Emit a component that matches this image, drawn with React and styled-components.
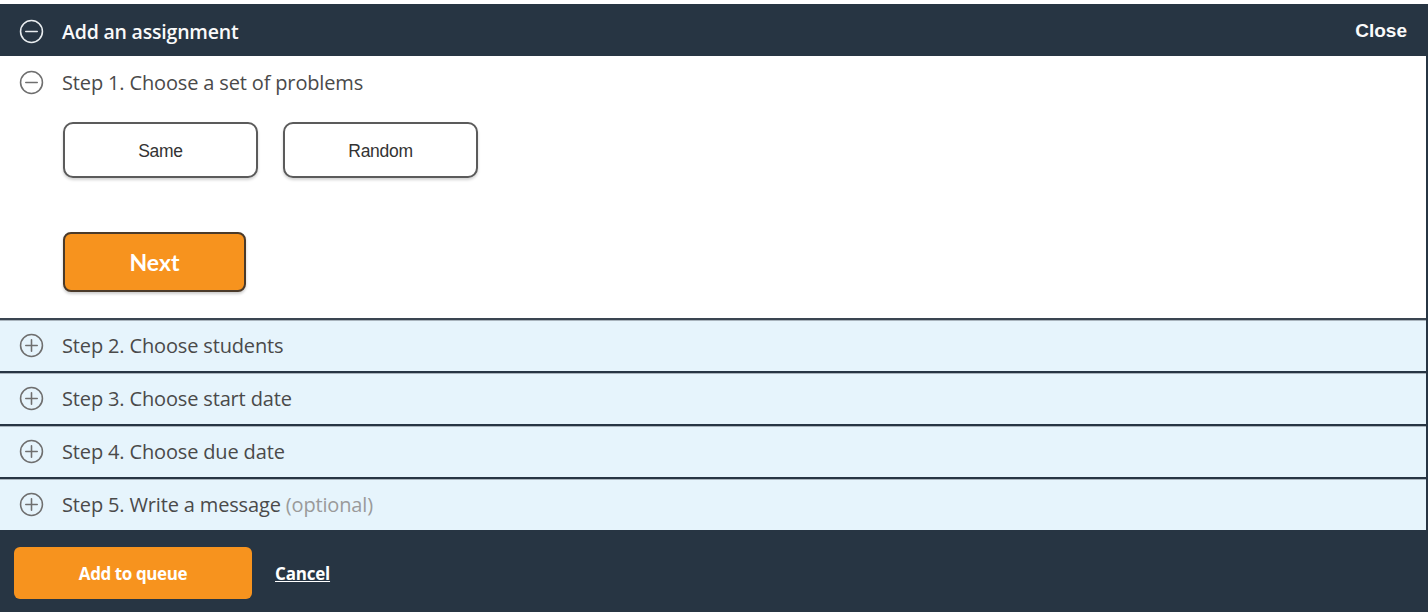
import React from 'react'
import styled, { createGlobalStyle } from 'styled-components'

const GlobalStyle = createGlobalStyle`
  html, body {
    margin: 0;
    padding: 0;
    background: #ffffff;
  }
  body {
    font-family: 'Open Sans', Lato, sans-serif;
  }
`

const navy = '#273543'

const Frame = styled('div')({
  marginTop: 4,
  width: 1428,
  height: 608,
  boxSizing: 'border-box',
  borderRight: `2px solid ${navy}`,
  display: 'flex',
  flexDirection: 'column',
  background: navy
})

const Header = styled('div')({
  height: 52,
  flexShrink: 0,
  display: 'flex',
  alignItems: 'center',
  justifyContent: 'space-between',
  padding: '2px 19px 0 19px',
  boxSizing: 'border-box',
  background: navy,
  color: '#fafafa'
})

const HeaderTitle = styled('div')({
  display: 'flex',
  alignItems: 'center',
  gap: 18,
  fontSize: 19.5,
  fontWeight: 600,
  letterSpacing: -0.2
})

const CloseLink = styled('span')({
  fontFamily: "'Liberation Sans', Arial, sans-serif",
  fontWeight: 700,
  fontSize: 19,
  cursor: 'pointer'
})

const OpenPanel = styled('div')({
  background: '#fff',
  height: 262,
  flexShrink: 0,
  display: 'flex',
  flexDirection: 'column',
  borderBottom: '2px solid #3a4551'
})

const StepHeading = styled('div')(({ height }) => ({
  height: height || 51,
  boxSizing: 'border-box',
  display: 'flex',
  alignItems: 'center',
  gap: 18,
  padding: '0 19px 2px',
  fontSize: 20,
  letterSpacing: -0.15,
  color: '#4a4a4a',
  flexShrink: 0
}))

const Optional = styled('span')({
  color: '#9a9a9a',
  marginLeft: 5
})

const Choices = styled('div')({
  display: 'flex',
  gap: 25,
  padding: '12px 0 0 63px'
})

const ChoiceButton = styled('button')({
  width: 195,
  height: 56,
  boxSizing: 'border-box',
  paddingTop: 3,
  background: '#fff',
  border: '2px solid #5b5b5b',
  borderRadius: 10,
  boxShadow: '0 2px 3px rgba(0,0,0,0.18)',
  fontFamily: "'Liberation Sans', Arial, sans-serif",
  fontSize: 17.5,
  letterSpacing: -0.3,
  color: '#333',
  cursor: 'pointer'
})

const NextButton = styled('button')({
  marginLeft: 63,
  marginTop: 54,
  width: 183,
  height: 60,
  boxSizing: 'border-box',
  background: '#f7931e',
  border: '2px solid #4a3a2a',
  borderRadius: 8,
  boxShadow: '0 2px 3px rgba(0,0,0,0.2)',
  color: '#fff',
  fontFamily: 'Lato, sans-serif',
  fontWeight: 700,
  fontSize: 23,
  cursor: 'pointer'
})

const ClosedStep = styled('div')({
  background: '#e6f4fc',
  borderTop: '1px solid #a9b4bd',
  marginBottom: 2,
  display: 'flex',
  flexDirection: 'column'
})

const Footer = styled('div')({
  flex: 1,
  display: 'flex',
  alignItems: 'center',
  gap: 23,
  padding: '4px 14px 0',
  marginTop: -2,
  background: navy
})

const QueueButton = styled('button')({
  width: 238,
  height: 52,
  background: '#f7931e',
  border: 'none',
  borderRadius: 6,
  color: '#fff',
  fontFamily: "'Open Sans', sans-serif",
  fontWeight: 700,
  fontSize: 17,
  letterSpacing: -0.4,
  cursor: 'pointer'
})

const CancelLink = styled('a')({
  color: '#fff',
  fontFamily: "'Open Sans', sans-serif",
  fontWeight: 700,
  fontSize: 17,
  letterSpacing: -0.2,
  textDecoration: 'underline',
  cursor: 'pointer'
})

const ToggleIcon = ({ open, color = '#6f6f6f' }) => (
  <svg width="25" height="25" viewBox="0 0 24 24" fill="none" stroke={color} strokeWidth="1.5" strokeLinecap="round">
    <circle cx="12" cy="12" r="10.5" />
    <line x1="6.5" y1="12" x2="17.5" y2="12" />
    {!open && <line x1="12" y1="6.5" x2="12" y2="17.5" />}
  </svg>
)

const steps = [
  { label: 'Step 2. Choose students' },
  { label: 'Step 3. Choose start date' },
  { label: 'Step 4. Choose due date' },
  { label: 'Step 5. Write a message', optional: true }
]

const App = () => {
  return (
    <>
      <GlobalStyle />
      <Frame>
        <Header>
          <HeaderTitle>
            <ToggleIcon open color="#e8ecef" />
            <span>Add an assignment</span>
          </HeaderTitle>
          <CloseLink>Close</CloseLink>
        </Header>
        <OpenPanel>
          <StepHeading height={54}>
            <ToggleIcon open />
            <span>Step 1. Choose a set of problems</span>
          </StepHeading>
          <Choices>
            <ChoiceButton>Same</ChoiceButton>
            <ChoiceButton>Random</ChoiceButton>
          </Choices>
          <NextButton>Next</NextButton>
        </OpenPanel>
        {steps.map(s => (
          <ClosedStep key={s.label}>
            <StepHeading height={50}>
              <ToggleIcon />
              <span>
                {s.label}
                {s.optional && <Optional>(optional)</Optional>}
              </span>
            </StepHeading>
          </ClosedStep>
        ))}
        <Footer>
          <QueueButton>Add to queue</QueueButton>
          <CancelLink>Cancel</CancelLink>
        </Footer>
      </Frame>
    </>
  )
}

export default App
